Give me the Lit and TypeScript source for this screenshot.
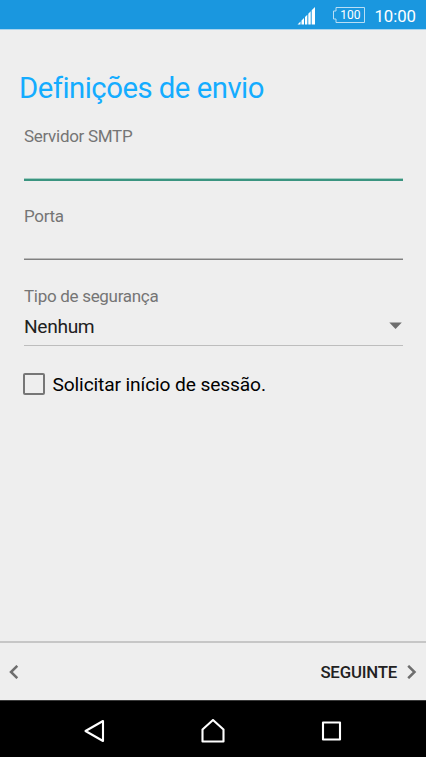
import { LitElement, html, css } from "lit";
import { customElement } from "lit/decorators.js";

@customElement("app-root")
export class AppRoot extends LitElement {
  static styles = css`
    :host {
      display: flex;
      flex-direction: column;
      width: 426px;
      height: 757px;
      overflow: hidden;
      background: #eeeeee;
      font-family: Roboto, "Noto Sans", sans-serif;
      color: #212121;
      white-space: nowrap;
    }
    * { box-sizing: border-box; }
    svg { display: block; flex: none; }
    .status {
      flex: none;
      height: 30px;
      background: #1a97df;
      border-bottom: 1px solid #a9d4ee;
      display: flex;
      align-items: center;
      justify-content: flex-end;
      padding-right: 10px;
      color: #fff;
    }
    .signal { margin-top: 2px; }
    .battery { margin: 1px 0 0 17px; }
    .level { font-size: 12px; fill: #fff; }
    .time { margin: 2px 0 0 9px; font-size: 16.8px; letter-spacing: -0.05px; line-height: 20px; }
    main { flex: 1; padding: 0 24px; }
    h1 {
      margin: 40px 0 0 -5px;
      font-size: 29.3px;
      letter-spacing: -0.5px;
      line-height: 36px;
      font-weight: 400;
      color: #14acff;
    }
    .label {
      font-size: 17px;
      letter-spacing: -0.3px;
      line-height: 20px;
      color: #757575;
    }
    .field { height: 80px; padding-top: 20px; }
    .line { width: 379px; height: 3px; margin-top: 32px; }
    .focus { background: linear-gradient(#a3cdc1 1px, #3a9480 1px); }
    .idle { background: linear-gradient(#b9b9b9 1px, #808080 1px, #808080 2px, transparent 2px); }
    .select {
      display: flex;
      align-items: center;
      justify-content: space-between;
      width: 379px;
      height: 40px;
      padding-top: 2px;
      border-bottom: 1px solid #bdbdbd;
      font-size: 19.2px;
      letter-spacing: -0.35px;
      line-height: 24px;
    }
    .select svg { margin-bottom: 1px; }
    .check {
      display: flex;
      align-items: flex-start;
      margin: 27px 0 0 -1.5px;
      gap: 8px;
      font-size: 19.2px;
      letter-spacing: -0.13px;
      line-height: 24px;
      color: #000;
    }
    .box {
      width: 22px;
      height: 22px;
      border: 2px solid #767676;
      border-radius: 2px;
    }
    .actions {
      flex: none;
      height: 59px;
      border-top: 2px solid #c6c6c6;
      display: flex;
      align-items: center;
      justify-content: space-between;
      padding: 1px 9px 0;
    }
    .next {
      display: flex;
      align-items: center;
      gap: 10px;
      font-size: 16.8px;
      letter-spacing: -0.2px;
      line-height: 20px;
      font-weight: 500;
    }
    .nav {
      flex: none;
      height: 57px;
      background: #000;
      border-top: 1px solid #3a3a3a;
      display: flex;
      align-items: center;
      justify-content: center;
      gap: 94px;
      padding-top: 4px;
    }
  `;

  render() {
    return html`
      <div class="status">
        <svg class="signal" width="18" height="18" viewBox="0 0 18 18" fill="#fff">
          <path d="M.5 17.500l3-3v3zM4.500 17.500v-4l2.500-2.500v6.500zM8 17.500V10l2.300-2.300v9.800zM11.300 17.500V6.700l2.400-2.400v13.200zM14.700 17.500V3.300L18 0v17.500z" />
        </svg>
        <svg class="battery" width="33" height="17" viewBox="0 0 33 17">
          <path d="M4 .5h28.500v15h-28.500v-3.500h-2.500v-8h2.500z" fill="none" stroke="#b9def5" />
          <text class="level" x="18.300" y="12.300" text-anchor="middle">100</text>
        </svg>
        <span class="time">10:00</span>
      </div>
      <main>
        <h1>Definições de envio</h1>
        <div class="field">
          <div class="label">Servidor SMTP</div>
          <div class="line focus"></div>
        </div>
        <div class="field">
          <div class="label">Porta</div>
          <div class="line idle"></div>
        </div>
        <div class="field">
          <div class="label">Tipo de segurança</div>
          <div class="select">
            <span>Nenhum</span>
            <svg width="14" height="8" viewBox="0 0 14 8"><path d="M.3 .5h12.500L6.500 7z" fill="#6e6e6e" /></svg>
          </div>
        </div>
        <div class="check"><span class="box"></span><span>Solicitar início de sessão.</span></div>
      </main>
      <div class="actions">
        <svg width="10" height="14" viewBox="0 0 10 14" fill="none" stroke="#6e6e6e" stroke-width="2.500"><path d="M8.300 .8L2 7l6.300 6.200" /></svg>
        <div class="next">
          <span>SEGUINTE</span>
          <svg width="10" height="14" viewBox="0 0 10 14" fill="none" stroke="#6e6e6e" stroke-width="2.500"><path d="M1.200 .8L7.500 7l-6.300 6.200" /></svg>
        </div>
      </div>
      <div class="nav">
        <svg width="24" height="24" viewBox="0 0 24 24" fill="none" stroke="#fff" stroke-width="2.100" stroke-linejoin="round"><path d="M20 2v20L2.500 12z" /></svg>
        <svg width="24" height="24" viewBox="0 0 24 24" fill="none" stroke="#fff" stroke-width="2.100" stroke-linejoin="round"><path d="M1.500 10.500L12 1 22.500 10.500v12h-21z" /></svg>
        <svg width="24" height="24" viewBox="0 0 24 24" fill="none" stroke="#fff" stroke-width="2.100" stroke-linejoin="round"><path d="M4 3.500h17v17H4z" /></svg>
      </div>
    `;
  }
}
